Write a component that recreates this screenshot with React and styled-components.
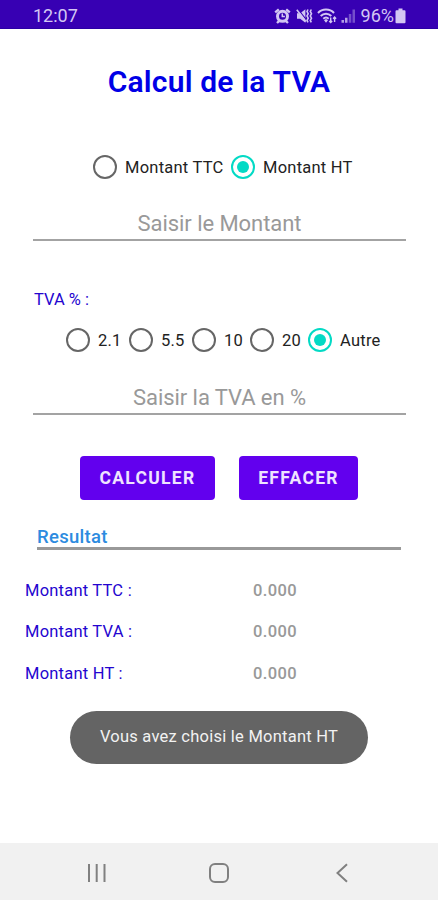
import React from 'react';
import styled, { createGlobalStyle } from 'styled-components';

const GlobalStyle = createGlobalStyle`
  * {
    box-sizing: border-box;
  }
  body {
    margin: 0;
    background: #fff;
    font-family: Roboto, "Liberation Sans", sans-serif;
  }
`

const Screen = styled.div`
  display: flex;
  flex-direction: column;
  width: 438px;
  height: 900px;
  background: #fff;
  overflow: hidden;
`

const StatusBar = styled.header`
  display: flex;
  align-items: center;
  justify-content: space-between;
  height: 29px;
  padding: 3px 32px 0 33px;
  background: #3700b3;
  border-bottom: 1px solid #2b00a4;
  color: #d3c6f3;
  font-size: 18px;
`

const StatusIcons = styled.div`
  display: flex;
  align-items: center;

  svg {
    flex: none;
    margin-right: ${props => props.$gap}px;
  }
  svg:last-child {
    margin: 0 0 0 1px;
  }
`

const Label = styled.span`
  letter-spacing: ${props => props.$spacing || 0}px;
  white-space: nowrap;
`

const Title = styled.h1`
  margin: 33px 0 0;
  height: 40px;
  line-height: 40px;
  text-align: center;
  font-size: 30px;
  font-weight: 600;
  color: #0000e6;
  letter-spacing: 0.2px;
`

const RadioRow = styled.div`
  display: flex;
  align-items: center;
  height: 26px;
  margin: ${props => props.$margin};
`

const RadioLabel = styled.label`
  display: flex;
  align-items: center;
  flex: none;
  width: ${props => props.$width}px;
  gap: 8px;
  font-size: 16.5px;
  color: #222;
`

const Circle = styled.span`
  display: flex;
  align-items: center;
  justify-content: center;
  flex: none;
  width: 24px;
  height: 24px;
  border: 2px solid ${props => (props.$checked ? '#03dac5' : '#666')};
  border-radius: 50%;

  &::after {
    content: '';
    width: 12px;
    height: 12px;
    border-radius: 50%;
    background: ${props => (props.$checked ? '#03dac5' : 'transparent')};
  }
`

const Field = styled.input`
  display: block;
  width: 373px;
  height: 34px;
  margin: ${props => props.$margin};
  padding: 0;
  border: 0;
  border-bottom: 2px solid #a3a3a3;
  border-radius: 0;
  outline: none;
  background: transparent;
  text-align: center;
  font-family: inherit;
  font-size: 22px;
  letter-spacing: -0.06px;
  color: #222;

  &::placeholder {
    color: #999;
    opacity: 1;
  }
`

const RateTitle = styled.div`
  height: 20px;
  margin: 49px 0 0 34px;
  line-height: 20px;
  font-size: 16.5px;
  color: #2405cf;
`

const Actions = styled.div`
  display: flex;
  gap: 24px;
  margin: 41px 0 0 80px;
`

const Button = styled.button`
  width: ${props => props.$width}px;
  height: 44px;
  padding: 0;
  border: 0;
  border-radius: 4px;
  background: #6200ee;
  color: #efe3ff;
  font-family: inherit;
  font-size: 17.5px;
  font-weight: 700;
  letter-spacing: 1.3px;
`

const ResultTitle = styled.h2`
  width: 364px;
  height: 24px;
  margin: 26px 0 0 37px;
  border-bottom: 3px solid #999;
  line-height: 22px;
  font-size: 18.5px;
  font-weight: 500;
  letter-spacing: 0.3px;
  color: #2c8be0;
`

const Results = styled.div`
  display: grid;
  grid-template-columns: 228px 1fr;
  grid-auto-rows: 41.3px;
  align-items: center;
  margin: 20px 0 0 25px;
  font-size: 16.5px;
  color: #2405cf;
`

const Amount = styled.span`
  color: #999;
  font-weight: 500;
  letter-spacing: 0.4px;
`

const Toast = styled.div`
  align-self: center;
  width: 298px;
  height: 53px;
  margin-top: 17px;
  border-radius: 27px;
  background: #646464;
  color: #f2f2f2;
  line-height: 52px;
  text-align: center;
  font-size: 16.5px;
  letter-spacing: 0.24px;
`

const NavBar = styled.nav`
  display: flex;
  align-items: center;
  height: 57px;
  margin-top: auto;
  padding: 2px 80px 0;
  justify-content: space-between;
  background: #f1f1f1;
`

function AlarmIcon() {
  return (
    <svg width="17" height="16" viewBox="0 0 17 16" fill="none" stroke="currentColor">
      <circle cx="8.5" cy="8.3" r="5" strokeWidth="3" />
      <path d="M1.2 4.4 4.8 1.4M15.8 4.4 12.2 1.4M3 15l2.3-2.2M14 15l-2.3-2.2" strokeWidth="2.4" />
      <path d="M8.3 5.4v3.2h2.6" strokeWidth="1.5" />
    </svg>
  );
}

function MuteIcon() {
  return (
    <svg width="17" height="16" viewBox="0 0 17 16" fill="none" stroke="currentColor">
      <path d="M1 5.2h3.2L9.4 1.2v13.6L4.2 10.8H1z" fill="currentColor" stroke="none" />
      <path d="M2 1.2 10.6 12.2" stroke="#3700b3" strokeWidth="1.1" />
      <path d="M.8 1.8 9.8 13.4" strokeWidth="1.6" />
      <path d="M12 1.5l-1 2 1.2 2.2L11 8l1.2 2.2-1.2 2.2 1 1.9M15.3 1.5l-1 2 1.2 2.2L14.3 8l1.2 2.2-1.2 2.2 1 1.9" strokeWidth="1.6" />
    </svg>
  );
}

function WifiIcon() {
  return (
    <svg width="20" height="16" viewBox="0 0 20 16" fill="none" stroke="currentColor">
      <path d="M1 5c4.2-4.6 11.8-4.6 16 0M3.7 8c3-3 7.6-3 10.6 0M6.3 10.8c1.6-1.5 3.8-1.5 5.4 0" strokeWidth="2" />
      <path d="m7 12.3 2-1.3 2 1.3-2 2.5z" fill="currentColor" stroke="none" />
      <path d="M13.7 9.5v5M12.2 13l1.5 1.6 1.5-1.6M17.6 14V9M16.1 10.7l1.5-1.6 1.5 1.6" strokeWidth="1.4" />
    </svg>
  );
}

function SignalIcon() {
  return (
    <svg width="15" height="16" viewBox="0 0 15 16" fill="currentColor">
      <path d="M.5 12h2.5v2.8H.5zM4 9.8h2.5v5H4z" opacity=".8" />
      <path d="M7.8 6h2.5v8.8H7.8zM11.5 1.5H14v13.3h-2.5z" opacity=".4" />
    </svg>
  );
}

function BatteryIcon() {
  return (
    <svg width="11" height="16" viewBox="0 0 11 16" fill="currentColor">
      <path d="M3.5.5h4v1.7h2q1 0 1 1v11q0 1-1 1h-8q-1 0-1-1v-11q0-1 1-1h2z" />
    </svg>
  );
}

function Radio(props) {
  return (
    <RadioLabel $width={props.width}>
      <Circle $checked={props.checked} onClick={props.onSelect} />
      <Label $spacing={0.24}>{props.text}</Label>
    </RadioLabel>
  );
}

const types = [
  { text: 'Montant TTC', width: 138 },
  { text: 'Montant HT', width: 130 }
]

const rates = [
  { text: '2.1', width: 63 },
  { text: '5.5', width: 63 },
  { text: '10', width: 58 },
  { text: '20', width: 58 },
  { text: 'Autre', width: 80 }
]

class App extends React.Component {

  state = {
    type: 'Montant HT',
    rate: 'Autre'
  }

  render() {
    const { type, rate } = this.state;
    return (
      <Screen>
        <GlobalStyle />
        <StatusBar>
          <Label>12:07</Label>
          <StatusIcons $gap={4.3}>
            <AlarmIcon />
            <MuteIcon />
            <WifiIcon />
            <SignalIcon />
            <Label>96%</Label>
            <BatteryIcon />
          </StatusIcons>
        </StatusBar>
        <Title>Calcul de la TVA</Title>
        <RadioRow $margin="52px 0 0 93px">
          {types.map(item => (
            <Radio
              key={item.text}
              {...item}
              checked={type === item.text}
              onSelect={() => this.setState({ type: item.text })}
            />
          ))}
        </RadioRow>
        <Field $margin="27px 0 0 33px" placeholder="Saisir le Montant" />
        <RateTitle>TVA % :</RateTitle>
        <RadioRow $margin="17px 0 0 66px">
          {rates.map(item => (
            <Radio
              key={item.text}
              {...item}
              checked={rate === item.text}
              onSelect={() => this.setState({ rate: item.text })}
            />
          ))}
        </RadioRow>
        <Field $margin="28px 0 0 33px" placeholder="Saisir la TVA en %" />
        <Actions>
          <Button $width={135}>CALCULER</Button>
          <Button $width={119}>EFFACER</Button>
        </Actions>
        <ResultTitle>Resultat</ResultTitle>
        <Results>
          <Label $spacing={0.22}>Montant TTC :</Label>
          <Amount>0.000</Amount>
          <Label $spacing={0.22}>Montant TVA :</Label>
          <Amount>0.000</Amount>
          <Label $spacing={0.22}>Montant HT :</Label>
          <Amount>0.000</Amount>
        </Results>
        <Toast>Vous avez choisi le {type}</Toast>
        <NavBar>
          <svg width="34" height="22" viewBox="0 0 34 22" fill="none" stroke="#808080" strokeWidth="2">
            <path d="M9 2v18M16.7 2v18M24.5 2v18" />
          </svg>
          <svg width="34" height="22" viewBox="0 0 34 22" fill="none" stroke="#808080" strokeWidth="2">
            <rect x="8" y="2" width="18" height="18" rx="5" />
          </svg>
          <svg width="34" height="22" viewBox="0 0 34 22" fill="none" stroke="#808080" strokeWidth="2">
            <path d="M23 2.3 13.5 11 23 19.7" />
          </svg>
        </NavBar>
      </Screen>
    );
  }
}

export default App;
